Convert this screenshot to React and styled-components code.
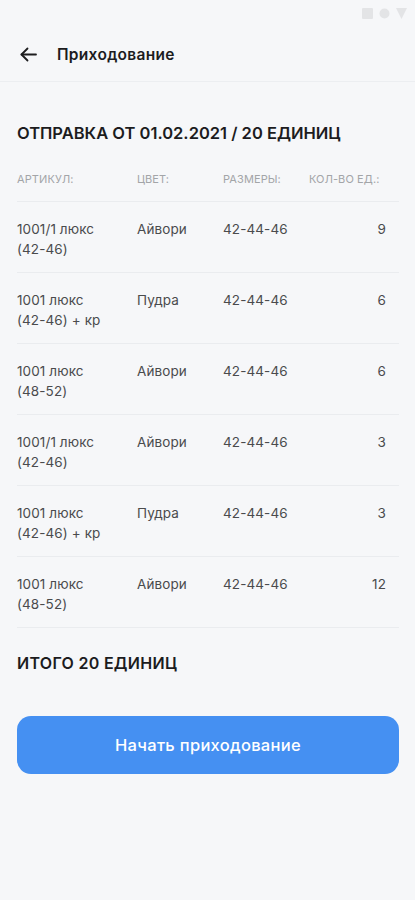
import React from "react";
import styled, { createGlobalStyle } from "styled-components";

const Global = createGlobalStyle`
  html, body { margin: 0; padding: 0; background: #f6f7f9; }
  body { font-family: Inter, "Noto Sans", sans-serif; -webkit-font-smoothing: antialiased; }
  * { box-sizing: border-box; }
`;

const Screen = styled.div`
  width: 415px;
  min-height: 900px;
  background: #f6f7f9;
  display: flex;
  flex-direction: column;
`;

const StatusBar = styled.div`
  height: 28px;
  display: flex;
  justify-content: flex-end;
  align-items: center;
  gap: 6px;
  padding: 0 8px 2px 0;
`;

const StatusIcon = styled.svg`
  width: 11px;
  height: 11px;
  fill: #e3e4e6;
`;

const Header = styled.header`
  height: 54px;
  display: flex;
  align-items: center;
  gap: 19px;
  padding: 0 0 0 19px;
  border-bottom: 1px solid #eceef1;
`;

const BackButton = styled.button`
  border: 0;
  background: none;
  padding: 0;
  width: 19px;
  height: 19px;
  display: flex;
  align-items: center;
  justify-content: center;
  color: #1d1d1f;
`;

const Title = styled.h1`
  margin: 0;
  font-size: 15.5px;
  font-weight: 600;
  color: #1c1c1e;
  letter-spacing: 0.3px;
`;

const Content = styled.main`
  padding: 41px 16px 0 17px;
  display: flex;
  flex-direction: column;
`;

const SectionTitle = styled.h2`
  margin: 0;
  font-size: 16.5px;
  line-height: 20px;
  font-weight: 600;
  color: #1c1c1e;
  text-transform: uppercase;
  letter-spacing: 0;
`;

const Table = styled.div`
  margin-top: 29px;
  display: flex;
  flex-direction: column;
`;

const Row = styled.div`
  display: grid;
  grid-template-columns: 120px 86px 86px 1fr;
  border-bottom: 1px solid #eaecef;
  padding: ${(p) => (p.$head ? "0 0 15px" : "17px 0 13px")};
`;

const HeadCell = styled.div`
  font-size: 11px;
  line-height: 14px;
  color: #a3a5a8;
  text-transform: uppercase;
  letter-spacing: 0.1px;
`;

const Cell = styled.div`
  font-size: 13.5px;
  line-height: 20px;
  color: #4a4b4d;
  letter-spacing: 0.1px;
  text-align: ${(p) => (p.$right ? "right" : "left")};
  padding-right: ${(p) => (p.$right ? "13px" : "0")};
`;

const Total = styled.div`
  margin-top: 25px;
  font-size: 16px;
  line-height: 20px;
  font-weight: 600;
  color: #1c1c1e;
  letter-spacing: 0.3px;
`;

const PrimaryButton = styled.button`
  margin-top: 43px;
  height: 58px;
  width: 100%;
  border: 0;
  border-radius: 14px;
  background: #4590f2;
  color: #ffffff;
  font-family: inherit;
  font-size: 16.5px;
  font-weight: 500;
  letter-spacing: 0.3px;
`;

const rows = [
  { art: ["1001/1 люкс", "(42-46)"], color: "Айвори", size: "42-44-46", qty: 9 },
  { art: ["1001 люкс", "(42-46) + кр"], color: "Пудра", size: "42-44-46", qty: 6 },
  { art: ["1001 люкс", "(48-52)"], color: "Айвори", size: "42-44-46", qty: 6 },
  { art: ["1001/1 люкс", "(42-46)"], color: "Айвори", size: "42-44-46", qty: 3 },
  { art: ["1001 люкс", "(42-46) + кр"], color: "Пудра", size: "42-44-46", qty: 3 },
  { art: ["1001 люкс", "(48-52)"], color: "Айвори", size: "42-44-46", qty: 12 },
];

export default function App() {
  return (
    <Screen>
      <Global />
      <StatusBar>
        <StatusIcon viewBox="0 0 11 11"><rect x="0" y="0" width="11" height="11" rx="1" /></StatusIcon>
        <StatusIcon viewBox="0 0 11 11"><circle cx="5.5" cy="5.5" r="5" /></StatusIcon>
        <StatusIcon viewBox="0 0 11 11"><path d="M0 0 H11 L5.5 11 Z" /></StatusIcon>
      </StatusBar>
      <Header>
        <BackButton aria-label="Назад">
          <svg width="19" height="19" viewBox="0 0 19 19" fill="none" stroke="currentColor" strokeWidth="1.8" strokeLinecap="round" strokeLinejoin="round">
            <path d="M17 9.5H2.5" />
            <path d="M8.5 3.5L2.5 9.5L8.5 15.5" />
          </svg>
        </BackButton>
        <Title>Приходование</Title>
      </Header>
      <Content>
        <SectionTitle>Отправка от 01.02.2021 / 20 единиц</SectionTitle>
        <Table>
          <Row $head>
            <HeadCell>Артикул:</HeadCell>
            <HeadCell>Цвет:</HeadCell>
            <HeadCell>Размеры:</HeadCell>
            <HeadCell>Кол-во ед.:</HeadCell>
          </Row>
          {rows.map((r, i) => (
            <Row key={i}>
              <Cell>
                {r.art[0]}
                <br />
                {r.art[1]}
              </Cell>
              <Cell>{r.color}</Cell>
              <Cell>{r.size}</Cell>
              <Cell $right>{r.qty}</Cell>
            </Row>
          ))}
        </Table>
        <Total>ИТОГО 20 ЕДИНИЦ</Total>
        <PrimaryButton>Начать приходование</PrimaryButton>
      </Content>
    </Screen>
  );
}
